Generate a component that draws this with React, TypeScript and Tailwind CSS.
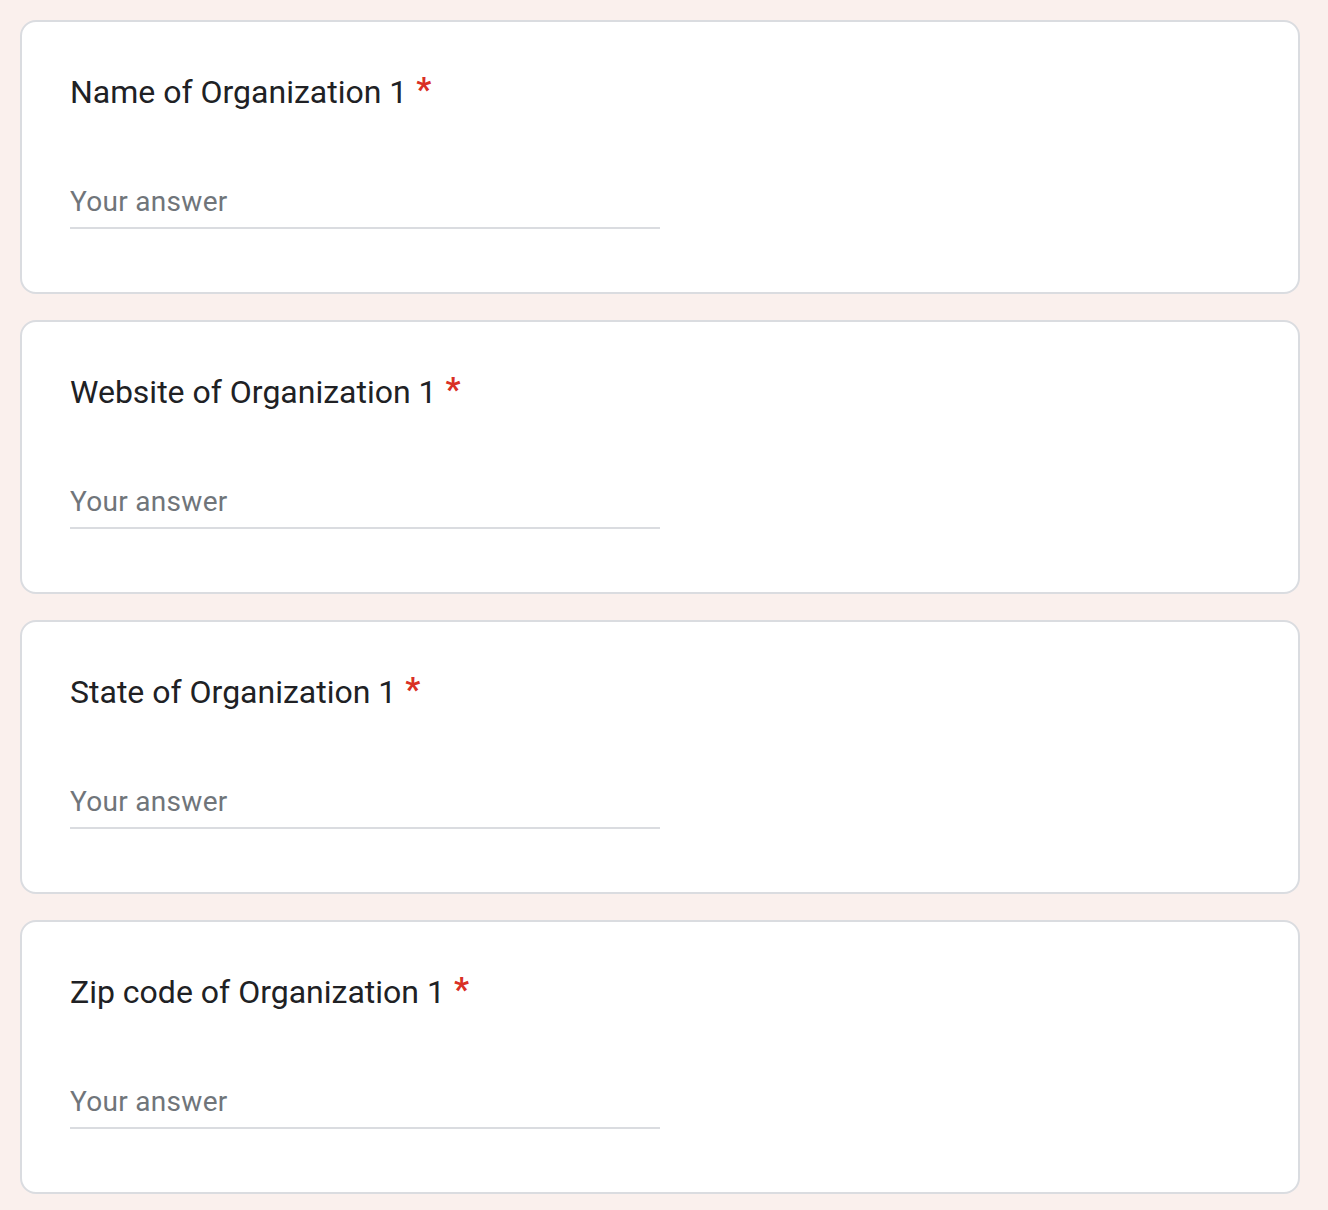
const questions = [
  'Name of Organization 1',
  'Website of Organization 1',
  'State of Organization 1',
  'Zip code of Organization 1',
];

const QuestionCard: React.FC<{ title: string }> = ({ title }) => (
  <div className="w-[1280px] h-[274px] bg-white border-2 border-[#dadce0] rounded-[16px] px-[48px] pt-[46px]">
    <div className="h-[48px] flex items-center text-[32px] text-[#202124]">
      <span>{title}</span>
      <span className="text-[#d93025] font-bold text-[33px] pl-[9px] mb-[4px]">*</span>
    </div>
    <div className="mt-[67px] w-[590px] border-b-2 border-[#dadce0] pb-[6px]">
      <input
        className="w-full h-[38px] outline-none text-[28px] text-[#202124] placeholder:text-[#70757a] tracking-[0.3px] bg-transparent"
        placeholder="Your answer"
      />
    </div>
  </div>
);

export default function App() {
  return (
    <div
      className="min-h-[1210px] bg-[#faf0ed] pt-[20px] pl-[20px] flex flex-col gap-[26px]"
      style={{ fontFamily: 'Roboto, "Liberation Sans", sans-serif' }}
    >
      {questions.map((q) => (
        <QuestionCard key={q} title={q} />
      ))}
    </div>
  );
}
